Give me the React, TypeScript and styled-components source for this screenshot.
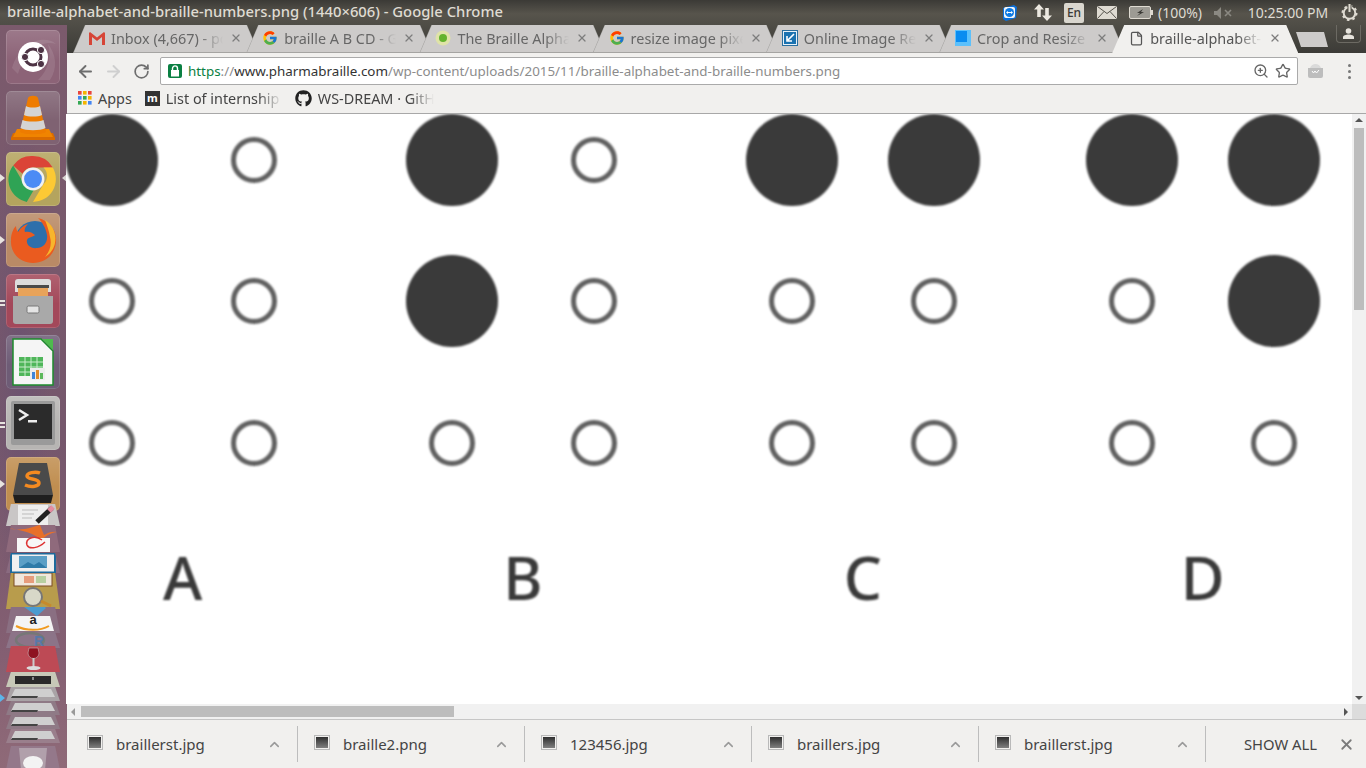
import React from 'react'
import styled, { createGlobalStyle } from 'styled-components'
import { ArrowLeft, ArrowRight, RotateCw, ZoomIn, Star, X, ChevronUp, File } from 'lucide-react'
import { FaGithub } from 'react-icons/fa'
import { FcGoogle } from 'react-icons/fc'

const UI_FONT = `'Noto Sans', 'Open Sans', sans-serif`

const Global = createGlobalStyle`
  html, body {
    margin: 0;
    width: 1366px;
    height: 768px;
    overflow: hidden;
    background: #3c3b37;
    font-family: ${UI_FONT};
  }
  * { box-sizing: border-box; }
`

const Screen = styled.div`
  width: 1366px;
  height: 768px;
  display: flex;
  flex-direction: column;
  overflow: hidden;
`

/* top panel */
const TopPanel = styled.div`
  height: 25px;
  flex: none;
  display: flex;
  align-items: center;
  padding-left: 7px;
  background: linear-gradient(#3b3a36, #57544c 55%, #4f4d46);
  color: #dfdbd2;
`

const WindowTitle = styled.div`
  flex: 1;
  font-size: 14.8px;
  font-weight: 500;
  line-height: 23px;
  padding-bottom: 2px;
  white-space: nowrap;
`

const Indicators = styled.div`
  display: flex;
  align-items: center;
  height: 25px;
  margin-right: 8px;
`

const Indicator = styled.div<{ $w: number; $mr?: number }>`
  width: ${(p) => p.$w}px;
  margin-right: ${(p) => p.$mr ?? 0}px;
  flex: none;
  display: flex;
  align-items: center;
  justify-content: center;
`

const LangBox = styled.div`
  width: 20px;
  height: 20px;
  border-radius: 2px;
  background: #d9d6ce;
  color: #3c3b37;
  font-size: 12px;
  font-weight: 500;
  display: flex;
  align-items: center;
  justify-content: center;
`

const PanelText = styled.span`
  font-size: 14px;
  white-space: nowrap;
  color: #dfdbd2;
`

/* launcher + browser */
const Desk = styled.div`
  flex: 1;
  display: flex;
  min-height: 0;
`

const Launcher = styled.div`
  width: 67px;
  flex: none;
  position: relative;
  overflow: hidden;
  padding: 5px 0 0 6px;
  background:
    radial-gradient(ellipse at 30% 45%, #6d5370 0, rgba(109, 83, 112, 0) 45%),
    linear-gradient(#7b5a6c, #75576c 55%, #845f72 85%, #8f6a78);
`

const Tile = styled.div<{ $bg: string }>`
  position: relative;
  width: 54px;
  height: 54px;
  margin-bottom: 7px;
  border-radius: 5px;
  background: linear-gradient(rgba(255, 255, 255, 0.14), rgba(255, 255, 255, 0) 55%), ${(p) => p.$bg};
  box-shadow: inset 0 0 0 1px rgba(255, 255, 255, 0.14);
  display: flex;
  align-items: center;
  justify-content: center;
`

const Pip = styled.div<{ $top: number; $right?: boolean; $color?: string }>`
  position: absolute;
  top: ${(p) => p.$top}px;
  ${(p) => (p.$right ? 'right: 0;' : 'left: 0;')}
  width: 0;
  height: 0;
  border-top: 4px solid transparent;
  border-bottom: 4px solid transparent;
  ${(p) =>
    p.$right
      ? `border-right: 5px solid ${p.$color ?? '#e8e4e0'};`
      : `border-left: 5px solid ${p.$color ?? '#e8e4e0'};`}
`

const DoublePip = styled.div<{ $top: number }>`
  position: absolute;
  left: 0;
  top: ${(p) => p.$top}px;
  width: 5px;
  height: 6px;
  border-top: 2px solid #e8e4e0;
  border-bottom: 2px solid #e8e4e0;
`

const FoldStack = styled.div`
  display: flex;
  flex-direction: column;
  margin-top: -14px;
  position: relative;
`

const Fold = styled.div<{ $h: number; $bg: string; $mt?: number }>`
  width: 54px;
  height: ${(p) => p.$h}px;
  margin-top: ${(p) => p.$mt ?? 0}px;
  background: ${(p) => p.$bg};
  clip-path: polygon(9% 0, 91% 0, 100% 100%, 0 100%);
  display: flex;
  align-items: center;
  justify-content: center;
  overflow: hidden;
`

/* browser */
const Browser = styled.div`
  flex: 1;
  min-width: 0;
  display: flex;
  flex-direction: column;
`

const TabStrip = styled.div`
  height: 28px;
  flex: none;
  position: relative;
  display: flex;
  padding-left: 6px;
  background: linear-gradient(#4f4d46, #3c3b37);
`

const Tab = styled.div<{ $active?: boolean }>`
  position: relative;
  z-index: ${(p) => (p.$active ? 2 : 1)};
  width: 186px;
  height: 28px;
  margin-right: -12.8px;
  flex: none;
  display: flex;
  align-items: center;
  padding: 0 12px 2px 16px;
  clip-path: polygon(0 100%, 12px 0, calc(100% - 12px) 0, 100% 100%);
  background: ${(p) => (p.$active ? '#f1f0ee' : '#a5a4a2')};

  &::before {
    content: '';
    position: absolute;
    inset: 0 1px ${(p) => (p.$active ? 0 : 1)}px 1px;
    clip-path: polygon(0 100%, 11.5px 0, calc(100% - 11.5px) 0, 100% 100%);
    background: ${(p) => (p.$active ? '#f1f0ee' : '#cdcbca')};
  }

  & > * {
    position: relative;
  }
`

const TabIcon = styled.div`
  width: 16px;
  height: 16px;
  flex: none;
  display: flex;
  align-items: center;
  justify-content: center;
  margin-right: 6px;
`

const Faded = styled.div<{ $w: number }>`
  width: ${(p) => p.$w}px;
  flex: none;
  white-space: nowrap;
  -webkit-mask-image: linear-gradient(to right, #000 calc(100% - 24px), transparent);
  mask-image: linear-gradient(to right, #000 calc(100% - 24px), transparent);
`

const TabTitle = styled(Faded)<{ $active?: boolean }>`
  font-size: 14.4px;
  color: ${(p) => (p.$active ? '#555' : '#666')};
`

const TabClose = styled.div`
  margin-left: 7px;
  display: flex;
  color: #7d7d7d;
`

const NewTab = styled.div`
  position: absolute;
  z-index: 3;
  left: 1229px;
  top: 7px;
  width: 32px;
  height: 15px;
  background: #cdcbca;
  clip-path: polygon(0 0, 28px 0, 100% 100%, 5px 100%);
`

const ProfileBtn = styled.div`
  position: absolute;
  right: 5px;
  top: 0;
  width: 25px;
  height: 18px;
  border: 1px solid #6c6a63;
  border-top: 0;
  border-radius: 0 0 4px 4px;
  display: flex;
  align-items: center;
  justify-content: center;
`

const Toolbar = styled.div`
  height: 32px;
  flex: none;
  display: flex;
  align-items: center;
  padding: 4px 0 0 4px;
  background: #f1f0ee;
`

const NavBtn = styled.div<{ $dim?: boolean }>`
  width: 28px;
  display: flex;
  justify-content: center;
  color: ${(p) => (p.$dim ? '#cfcfcf' : '#6e6e6e')};
`

const UrlBox = styled.div`
  width: 1138px;
  height: 28px;
  margin-left: 5px;
  flex: none;
  display: flex;
  align-items: center;
  padding: 0 3px 0 7px;
  background: #fff;
  border: 1px solid #aaa;
  border-radius: 2px;
`

const LockBadge = styled.div`
  width: 14px;
  height: 14px;
  border-radius: 2px;
  background: #0b8043;
  flex: none;
  margin-right: 6px;
  display: flex;
  align-items: center;
  justify-content: center;
`

const Url = styled.div`
  flex: 1;
  font-size: 13.4px;
  white-space: nowrap;
  color: #8c8c8c;
`

const UrlScheme = styled.span`
  color: #0b8043;
`

const UrlHost = styled.span`
  color: #333;
`

const UrlAction = styled.div`
  width: 22px;
  display: flex;
  justify-content: center;
  color: #666;
`

const ToolEnd = styled.div`
  flex: 1;
  display: flex;
  align-items: center;
  justify-content: space-between;
  padding: 0 15px 0 9px;
`

const MenuDots = styled.div`
  display: flex;
  flex-direction: column;
  gap: 3px;
`

const MenuDot = styled.i`
  width: 3px;
  height: 3px;
  border-radius: 50%;
  background: #777;
`

const Bookmarks = styled.div`
  height: 29px;
  flex: none;
  display: flex;
  align-items: center;
  padding: 0 0 2px 11px;
  background: #f1f0ee;
  border-bottom: 1px solid #a8a8a8;
`

const Bookmark = styled.div`
  display: flex;
  align-items: center;
  gap: 6px;
  margin-right: 13px;
  font-size: 14.4px;
  color: #444;
  white-space: nowrap;
`

const MBadge = styled.div`
  width: 15px;
  height: 15px;
  background: #333;
  color: #fff;
  font-size: 11px;
  font-weight: 700;
  line-height: 14px;
  text-align: center;
`

/* page */
const PageRow = styled.div`
  height: 590px;
  flex: none;
  display: flex;
`

const Canvas = styled.div`
  flex: 1;
  min-width: 0;
  overflow: hidden;
  background: #fff;
  display: flex;
  gap: 106.5px;
  margin-left: -1px;
  position: relative;
`

const Cell = styled.div`
  width: 233.5px;
  flex: none;
`

const DotGrid = styled.div`
  display: grid;
  grid-template-columns: 92px 92px;
  grid-auto-rows: 92px;
  column-gap: 49.5px;
  row-gap: 49.4px;
`

const Dot = styled.div<{ $on: boolean }>`
  align-self: center;
  justify-self: center;
  width: ${(p) => (p.$on ? 92 : 46)}px;
  height: ${(p) => (p.$on ? 92 : 46)}px;
  border-radius: 50%;
  background: ${(p) => (p.$on ? '#3a3a3a' : '#fff')};
  border: ${(p) => (p.$on ? 0 : 5)}px solid #606060;
  filter: blur(0.8px);
`

const Letter = styled.div`
  margin-top: 44px;
  text-align: center;
  font-family: 'Noto Sans', sans-serif;
  font-size: 60px;
  font-weight: 500;
  line-height: 88px;
  color: #3a3a3a;
  filter: blur(1px);
`

const VScroll = styled.div`
  width: 14px;
  flex: none;
  background: #f1f1f1;
  display: flex;
  flex-direction: column;
  align-items: center;
  padding-top: 4px;
`

const VThumb = styled.div`
  width: 10px;
  height: 182px;
  margin-top: 6px;
  background: #bdbdbd;
`

const VSpacer = styled.div`
  flex: 1;
`

const Arrow = styled.div<{ $dir: 'up' | 'down' | 'left' | 'right' }>`
  width: 0;
  height: 0;
  flex: none;
  ${(p) =>
    p.$dir === 'up'
      ? 'border-left:4px solid transparent;border-right:4px solid transparent;border-bottom:4px solid #555;'
      : p.$dir === 'down'
        ? 'border-left:4px solid transparent;border-right:4px solid transparent;border-top:4px solid #555;margin-bottom:4px;'
        : p.$dir === 'left'
          ? 'border-top:4px solid transparent;border-bottom:4px solid transparent;border-right:4px solid #999;'
          : 'border-top:4px solid transparent;border-bottom:4px solid transparent;border-left:4px solid #555;'}
`

const HScroll = styled.div`
  height: 15px;
  flex: none;
  display: flex;
  align-items: center;
  padding-left: 4px;
  background: #f1f1f1;
`

const HThumb = styled.div`
  width: 373px;
  height: 11px;
  margin-left: 6px;
  background: #bdbdbd;
`

const HCorner = styled.div`
  width: 14px;
  height: 15px;
  margin-left: 4px;
  flex: none;
  background: #dcdcdc;
`

const Shelf = styled.div`
  flex: 1;
  display: flex;
  align-items: center;
  padding-left: 4px;
  background: #f1f0ee;
  border-top: 1px solid #c6c6c6;
`

const ShelfItem = styled.div`
  width: 227px;
  height: 36px;
  flex: none;
  display: flex;
  align-items: center;
  padding: 0 15px 0 16px;
  border-right: 1px solid #bdbdbd;
  color: #444;
`

const FileThumb = styled.div`
  width: 16px;
  height: 15px;
  flex: none;
  margin: -4px 13px 0 0;
  border: 1px solid #b9b9b9;
  background: linear-gradient(#2e2e2e, #808080) content-box;
  padding: 1px;
`

const ShelfName = styled.div`
  flex: 1;
  font-size: 15px;
  white-space: nowrap;
`

const ShowAll = styled.div`
  margin-left: 38px;
  font-size: 14.8px;
  color: #444;
  white-space: nowrap;
`

const ShelfClose = styled.div`
  margin-left: 21px;
  display: flex;
  color: #7a7a7a;
`

/* drawings */
const GmailIcon = () => (
  <svg width="16" height="13" viewBox="0 0 16 13">
    <path d="M0 1v12h3V5l5 4 5-4v8h3V1l-1-1-7 5.5L1 0z" fill="#d64537" />
  </svg>
)

const BraillePageFav = () => (
  <svg width="16" height="16" viewBox="0 0 16 16">
    <circle cx="8" cy="8" r="7.5" fill="#dfe3a8" />
    <circle cx="8" cy="8" r="4" fill="#63b32d" />
  </svg>
)

const ResizeFav = () => (
  <svg width="16" height="16" viewBox="0 0 16 16">
    <rect x="0.5" y="0.5" width="15" height="15" fill="#e8f1f8" stroke="#2a6f9f" />
    <rect x="2" y="2" width="12" height="12" fill="#1a72b0" />
    <path d="M12 4 6 10M5 6v5h5" stroke="#fff" strokeWidth="1.6" fill="none" />
  </svg>
)

const CropFav = () => (
  <svg width="16" height="16" viewBox="0 0 16 16">
    <rect width="16" height="16" fill="#5cc0fb" />
    <rect x="1" y="1" width="11" height="11" fill="#0a8cf0" />
  </svg>
)

const TeamViewer = () => (
  <svg width="16" height="16" viewBox="0 0 16 16">
    <path d="M1 3l11-3 3 2-1 11-10 3-3-2z" fill="#0c6fd8" />
    <rect x="2" y="2" width="11" height="11" rx="2" fill="#f2f6fb" />
    <circle cx="7.5" cy="7.5" r="4.5" fill="#0e7be6" />
    <path d="M4 7.5l2-1.6v1h3v-1l2 1.6-2 1.6v-1H6v1z" fill="#fff" />
  </svg>
)

const NetArrows = () => (
  <svg width="18" height="17" viewBox="0 0 18 17">
    <path d="M5 0l5 5.5H6.800V13H3.200V5.500H0z" fill="#ece8e0" />
    <path d="M13 17l-5-5.500h3.200V4h3.600v7.500H18z" fill="#ece8e0" />
  </svg>
)

const Mail = () => (
  <svg width="20" height="13" viewBox="0 0 20 13">
    <rect width="20" height="13" rx="1" fill="#dfdbd2" />
    <path d="M0.5 0.5 10 7.5l9.500-7M0.500 12.500 7 5.500M19.500 12.500 13 5.500" stroke="#55524b" fill="none" />
  </svg>
)

const Battery = () => (
  <svg width="24" height="13" viewBox="0 0 24 13">
    <rect x="0.5" y="0.5" width="21" height="12" rx="1.5" fill="#9d9b94" stroke="#dfdbd2" />
    <rect x="22" y="4" width="2" height="5" fill="#dfdbd2" />
    <path d="M14 3 8 7h3l-3 3 7-4h-3z" fill="#3c3b37" />
  </svg>
)

const Mute = () => (
  <svg width="18" height="12" viewBox="0 0 18 12">
    <path d="M0 4h3l4-4v12L3 8H0z" fill="#8b8982" />
    <path d="M11 3l6 6M17 3l-6 6" stroke="#8b8982" strokeWidth="1.6" />
  </svg>
)

const Power = () => (
  <svg width="17" height="17" viewBox="0 0 17 17">
    <circle cx="8.5" cy="9" r="5.8" fill="none" stroke="#dfdbd2" strokeWidth="2" />
    <circle cx="8.5" cy="9" r="7" fill="none" stroke="#dfdbd2" strokeWidth="2" strokeDasharray="2.5 3" />
    <rect x="6.5" y="0" width="4" height="8" fill="#55524b" />
    <rect x="7.5" y="0" width="2" height="8" fill="#dfdbd2" />
  </svg>
)

const Person = () => (
  <svg width="13" height="11" viewBox="0 0 13 11">
    <circle cx="6.5" cy="3" r="2.8" fill="#e6e3dc" />
    <path d="M1 11V9c0-1.500 3-2.500 5.500-2.500S12 7.500 12 9v2z" fill="#e6e3dc" />
  </svg>
)

const Lock = () => (
  <svg width="10" height="12" viewBox="0 0 10 12">
    <path d="M2.500 5V3.400a2.500 2.500 0 0 1 5 0V5" fill="none" stroke="#fff" strokeWidth="1.400" />
    <rect x="1" y="5" width="8" height="6.500" fill="#fff" />
  </svg>
)

const Extension = () => (
  <svg width="17" height="14" viewBox="0 0 17 14">
    <path d="M1 4h15v8a2 2 0 0 1-2 2H3a2 2 0 0 1-2-2z" fill="#bdbdbd" />
    <path d="M3 4c1-2.500 3-4 5.500-4S13 1.500 14 4z" fill="#dadada" />
    <path d="M5 7l1.500 2L8 7l1.500 2L12 6" stroke="#fff" fill="none" />
  </svg>
)

const APPS_COLORS = ['#e8453c', '#f4b400', '#e8453c', '#4285f4', '#34a853', '#f4b400', '#34a853', '#f4b400', '#4285f4']

const AppsIcon = () => (
  <svg width="14" height="14" viewBox="0 0 14 14">
    {APPS_COLORS.map((c, i) => (
      <rect key={i} x={(i % 3) * 5} y={Math.floor(i / 3) * 5} width="3.600" height="3.600" fill={c} />
    ))}
  </svg>
)

const UbuntuMark = () => (
  <svg width="54" height="54" viewBox="0 0 54 54">
    <path d="M6 38C14 12 38 4 50 14 38 10 20 18 12 44z" fill="#fff" opacity="0.1" />
    <path d="M44 50c8-12 6-26-2-36 4 14 0 26-10 36z" fill="#fff" opacity="0.1" />
    <circle cx="27" cy="27" r="15" fill="#fff" />
    <circle cx="27" cy="27" r="8" fill="none" stroke="#4d3344" strokeWidth="3" />
    <circle cx="35" cy="20" r="3.600" fill="#4d3344" stroke="#fff" />
    <circle cx="35" cy="34" r="3.600" fill="#4d3344" stroke="#fff" />
    <circle cx="19" cy="27" r="3.600" fill="#4d3344" stroke="#fff" />
  </svg>
)

const Vlc = () => (
  <svg width="44" height="46" viewBox="0 0 44 46">
    <path d="M2 38h40l3 7H-1z" fill="#d96b00" />
    <path d="M6 34h32l4 8H2z" fill="#f08400" />
    <path d="M17 3c1-3 9-3 10 0l8 34c-3 3-23 3-26 0z" fill="#ee7c00" />
    <path d="M15 11c3 2 11 2 14 0l2 9c-4 2-14 2-18 0z" fill="#d4d4d4" />
    <path d="M11.500 25c5 2 16 2 21 0l2 8c-5 3-20 3-25 0z" fill="#d4d4d4" />
  </svg>
)

const Chrome = () => (
  <svg width="50" height="50" viewBox="0 0 48 48">
    <path d="M24 2a22 22 0 0 1 19 11H24a11 11 0 0 0-10 6L5 11A22 22 0 0 1 24 2z" fill="#db4437" />
    <path d="M5 11l10 17a10 10 0 0 0 10 6l-7 12A22 22 0 0 1 5 11z" fill="#2fa355" />
    <path d="M43 13a22 22 0 0 1-19 33l10-17a11 11 0 0 0 0-16z" fill="#fcc934" />
    <circle cx="24" cy="24" r="11" fill="#f1f1f1" />
    <circle cx="24" cy="24" r="8.600" fill="#4c8bf5" />
  </svg>
)

const Firefox = () => (
  <svg width="50" height="50" viewBox="0 0 50 50">
    <circle cx="27" cy="26" r="20" fill="#2d6fab" />
    <path d="M30 3c12 3 19 13 18 24-1 12-10 21-23 21S2 38 3 25c0-6 2-11 5-14 0 3 1 5 2 6 2-4 6-7 10-8-3 3-4 6-3 8 3-1 7 0 10 3-2 2-7 2-8 5-1 4 3 9 10 8 7 0 11-6 10-13-1-7-5-13-9-17z" fill="#ea5b1f" />
    <path d="M37 5c7 4 12 13 10 23-1 6-5 11-10 14 5-6 7-13 5-20-1-6-3-12-5-17z" fill="#f7b52c" />
  </svg>
)

const Files = () => (
  <svg width="42" height="46" viewBox="0 0 42 46">
    <path d="M3 4q0-3 3-3h30q3 0 3 3v10H3z" fill="#dcdcdc" />
    <rect x="5" y="7" width="32" height="3" fill="#4a4a4a" />
    <path d="M6 10h30v8H6z" fill="#e8a35a" />
    <path d="M1 18h40v25q0 3-3 3H4q-3 0-3-3z" fill="#a9a9a9" />
    <rect x="15" y="28" width="12" height="7" rx="1.500" fill="#e4e4e4" stroke="#777" />
  </svg>
)

const Calc = () => (
  <svg width="42" height="48" viewBox="0 0 42 48">
    <path d="M1 1h28l12 12v34H1z" fill="#f5f5f5" stroke="#1d8a2d" strokeWidth="1.500" />
    <path d="M30 1h11v11z" fill="#4dbb4d" />
    <rect x="7" y="19" width="24" height="19" fill="#4fb65a" />
    <path d="M7 24h24M7 29h24M7 34h24M13 19v19M19 19v19M25 19v19" stroke="#c9eccb" />
    <rect x="18" y="30" width="15" height="12" fill="#ececec" />
    <rect x="20" y="34" width="3" height="7" fill="#3f84d8" />
    <rect x="24" y="32" width="3" height="9" fill="#e08a2a" />
    <rect x="28" y="35" width="3" height="6" fill="#5cb85c" />
  </svg>
)

const Terminal = () => (
  <svg width="46" height="44" viewBox="0 0 46 44">
    <rect x="1" y="0" width="44" height="44" rx="2" fill="#9a9a9a" />
    <rect x="4" y="3" width="38" height="35" fill="#2b2b2b" />
    <path d="M9 9l8 5-8 5" fill="none" stroke="#eee" strokeWidth="2.500" />
    <rect x="18" y="19" width="9" height="2.500" fill="#eee" />
  </svg>
)

const Sublime = () => (
  <svg width="44" height="42" viewBox="0 0 44 42">
    <path d="M8 0h28l6 32H2z" fill="#4a4a4a" />
    <path d="M2 32h40l-2 8H4z" fill="#1f1f1f" />
    <path d="M29 10c-5-2-13 0-13 3 0 4 12 2 12 7 0 3-7 5-14 2" fill="none" stroke="#f48a20" strokeWidth="3.500" />
  </svg>
)

const PencilDoc = () => (
  <svg width="46" height="22" viewBox="0 0 46 22">
    <rect x="8" y="1" width="30" height="21" fill="#eee" />
    <path d="M12 6h16M12 10h12M12 14h10" stroke="#bbb" />
    <path d="M27 18 42 4" stroke="#222" strokeWidth="5" />
    <path d="M39 7 43 3" stroke="#e58ca0" strokeWidth="5" />
  </svg>
)

const Swoosh = () => (
  <svg width="54" height="28" viewBox="0 0 54 28">
    <path d="M2 3c14 4 24-1 32-3l4 10c4-3 10-4 13-3-8 1-12 5-16 8-5-4-8-8-33-12z" fill="#e8702a" />
    <rect x="11" y="13" width="33" height="15" fill="#f7f7f7" />
    <path d="M36 15c-8-6-17-1-15 5 2 5 12 3 18-3" fill="none" stroke="#d33" strokeWidth="1.500" />
  </svg>
)

const ImageDoc = () => (
  <svg width="46" height="20" viewBox="0 0 46 20">
    <rect x="1" y="0.500" width="44" height="19" fill="#f0f0f0" stroke="#1d6a9c" strokeWidth="2" />
    <rect x="9" y="3" width="28" height="12" fill="#5b9fc6" />
    <path d="M9 15l9-6 6 3 5-3 8 6z" fill="#2f7ba8" />
  </svg>
)

const Magnifier = () => (
  <svg width="54" height="36" viewBox="0 0 54 36">
    <rect x="8" y="0" width="38" height="13" fill="#f0e7dc" stroke="#7b4a22" />
    <rect x="18" y="3" width="10" height="7" fill="#e69c7c" />
    <rect x="30" y="3" width="10" height="7" fill="#b7cfa0" />
    <circle cx="27" cy="24" r="9" fill="#d8d8c8" stroke="#777" strokeWidth="2" />
    <path d="M35 28l10 5" stroke="#c68a2c" strokeWidth="3" />
  </svg>
)

const AmazonMark = () => (
  <svg width="54" height="26" viewBox="0 0 54 26">
    <path d="M18 0a14 9 0 0 1 22 1l-9 8z" fill="#4a9bd0" />
    <path d="M10 9h34l4 15H6z" fill="#f4f4f4" />
    <text x="27" y="17" textAnchor="middle" fontFamily="'Liberation Sans', sans-serif" fontWeight="700" fontSize="13" fill="#222">a</text>
    <path d="M10 19c10 5 24 5 33 0" stroke="#f09a1f" strokeWidth="2" fill="none" />
  </svg>
)

const RMark = () => (
  <svg width="54" height="16" viewBox="0 0 54 16">
    <ellipse cx="24" cy="8" rx="14" ry="7" fill="none" stroke="#777" strokeWidth="2.500" />
    <text x="33" y="14" textAnchor="middle" fontFamily="'Liberation Sans', sans-serif" fontWeight="700" fontSize="14" fill="#5878a8">R</text>
  </svg>
)

const Wine = () => (
  <svg width="54" height="26" viewBox="0 0 54 26">
    <path d="M23 2h9l1 5a5.500 5.500 0 0 1-11 0z" fill="#8e1220" stroke="#ccc" strokeWidth="0.500" />
    <path d="M27.500 12v9" stroke="#ccc" strokeWidth="2" />
    <ellipse cx="27.500" cy="22" rx="7" ry="2" fill="#ddd" />
  </svg>
)

const ScreenDrive = () => (
  <svg width="50" height="12" viewBox="0 0 50 12">
    <rect x="7" y="2" width="36" height="8" fill="#2a2a2a" />
    <path d="M25 3v3" stroke="#eee" />
  </svg>
)

const Drive = () => (
  <svg width="48" height="11" viewBox="0 0 48 11">
    <path d="M6 0h36l4 8H2z" fill="#cfcfcf" />
    <path d="M3 7h26l-1 2H2z" fill="#444" />
  </svg>
)

const Trash = () => (
  <svg width="34" height="24" viewBox="0 0 34 24">
    <path d="M3 2h28l-2 22H5z" fill="#dcdcdc" opacity="0.4" />
    <ellipse cx="17" cy="17" rx="10" ry="7" fill="#f3f3f3" />
  </svg>
)

const PAGE_DOTS: boolean[][] = [
  [true, false, false, false, false, false],
  [true, false, true, false, false, false],
  [true, true, false, false, false, false],
  [true, true, false, true, false, false],
]

const LETTERS = ['A', 'B', 'C', 'D']

type TabData = { title: string; icon: React.ReactNode; active?: boolean }

const TABS: TabData[] = [
  { title: 'Inbox (4,667) - po', icon: <GmailIcon /> },
  { title: 'braille A B CD - G', icon: <FcGoogle size={16} /> },
  { title: 'The Braille Alpha', icon: <BraillePageFav /> },
  { title: 'resize image pixe', icon: <FcGoogle size={16} /> },
  { title: 'Online Image Re', icon: <ResizeFav /> },
  { title: 'Crop and Resize', icon: <CropFav /> },
  { title: 'braille-alphabet-', icon: <File size={15} color="#555" />, active: true },
]

const DOWNLOADS = ['braillerst.jpg', 'braille2.png', '123456.jpg', 'braillers.jpg', 'braillerst.jpg']

const App = () => (
  <Screen>
    <Global />
    <TopPanel>
      <WindowTitle>braille-alphabet-and-braille-numbers.png (1440×606) - Google Chrome</WindowTitle>
      <Indicators>
        <Indicator $w={16} $mr={15}><TeamViewer /></Indicator>
        <Indicator $w={20} $mr={11}><NetArrows /></Indicator>
        <Indicator $w={20} $mr={13}><LangBox>En</LangBox></Indicator>
        <Indicator $w={20} $mr={12}><Mail /></Indicator>
        <Indicator $w={24} $mr={4}><Battery /></Indicator>
        <Indicator $w={46} $mr={11}><PanelText>(100%)</PanelText></Indicator>
        <Indicator $w={18} $mr={16}><Mute /></Indicator>
        <Indicator $w={80} $mr={13}><PanelText>10:25:00 PM</PanelText></Indicator>
        <Indicator $w={17}><Power /></Indicator>
      </Indicators>
    </TopPanel>
    <Desk>
      <Launcher>
        <Tile $bg="#8c6377"><UbuntuMark /></Tile>
        <Tile $bg="#7f6272"><Vlc /></Tile>
        <Tile $bg="#b4a45e"><Chrome /></Tile>
        <Pip $top={149} /><Pip $top={149} $right $color="#d9d5d2" />
        <Tile $bg="#b98a66"><Firefox /></Tile>
        <Pip $top={211} />
        <Tile $bg="#a3485a"><Files /></Tile>
        <DoublePip $top={275} />
        <Tile $bg="#6e5c76"><Calc /></Tile>
        <Tile $bg="#b7b5b3"><Terminal /></Tile>
        <DoublePip $top={397} />
        <Tile $bg="#c08e50"><Sublime /></Tile>
        <Pip $top={455} />
        <FoldStack>
          <Fold $h={22} $bg="#c9c6c6"><PencilDoc /></Fold>
          <Fold $h={27} $bg="#8f6a7c" $mt={-1}><Swoosh /></Fold>
          <Fold $h={20} $bg="#8a6b80" $mt={1}><ImageDoc /></Fold>
          <Fold $h={36} $bg="#b89c4c"><Magnifier /></Fold>
          <Fold $h={26} $bg="#8a6f82" $mt={-2}><AmazonMark /></Fold>
          <Fold $h={16} $bg="#8c7488" $mt={-1}><RMark /></Fold>
          <Fold $h={26} $bg="#bd4a55" $mt={-2}><Wine /></Fold>
          <Fold $h={15} $bg="#c7c9b8"><ScreenDrive /></Fold>
          <Fold $h={14} $bg="#a9a3a6"><Drive /></Fold>
          <Fold $h={14} $bg="#8f7a86"><Drive /></Fold>
          <Fold $h={14} $bg="#8f7a86"><Drive /></Fold>
          <Fold $h={14} $bg="#9a7f8c"><Drive /></Fold>
          <Fold $h={24} $bg="#94788a" $mt={3}><Trash /></Fold>
        </FoldStack>
        <Pip $top={669} $color="#5cb6ea" />
      </Launcher>
      <Browser>
        <TabStrip>
          {TABS.map((t) => (
            <Tab key={t.title} $active={t.active}>
              <TabIcon>{t.icon}</TabIcon>
              <TabTitle $w={112} $active={t.active}>{t.title}</TabTitle>
              <TabClose><X size={12} strokeWidth={2.5} /></TabClose>
            </Tab>
          ))}
          <NewTab />
          <ProfileBtn><Person /></ProfileBtn>
        </TabStrip>
        <Toolbar>
          <NavBtn><ArrowLeft size={19} strokeWidth={2.4} /></NavBtn>
          <NavBtn $dim><ArrowRight size={19} strokeWidth={2.4} /></NavBtn>
          <NavBtn><RotateCw size={17} strokeWidth={2.4} /></NavBtn>
          <UrlBox>
            <LockBadge><Lock /></LockBadge>
            <Url>
              <UrlScheme>https</UrlScheme>://<UrlHost>www.pharmabraille.com</UrlHost>/wp-content/uploads/2015/11/braille-alphabet-and-braille-numbers.png
            </Url>
            <UrlAction><ZoomIn size={16} /></UrlAction>
            <UrlAction><Star size={16} /></UrlAction>
          </UrlBox>
          <ToolEnd>
            <Extension />
            <MenuDots><MenuDot /><MenuDot /><MenuDot /></MenuDots>
          </ToolEnd>
        </Toolbar>
        <Bookmarks>
          <Bookmark><AppsIcon />Apps</Bookmark>
          <Bookmark><MBadge>m</MBadge><Faded $w={116}>List of internship</Faded></Bookmark>
          <Bookmark><FaGithub size={17} color="#222" /><Faded $w={116}>WS-DREAM · GitH</Faded></Bookmark>
        </Bookmarks>
        <PageRow>
          <Canvas>
            {LETTERS.map((l, i) => (
              <Cell key={l}>
                <DotGrid>
                  {PAGE_DOTS[i].map((on, j) => <Dot key={j} $on={on} />)}
                </DotGrid>
                <Letter>{l}</Letter>
              </Cell>
            ))}
          </Canvas>
          <VScroll>
            <Arrow $dir="up" />
            <VThumb />
            <VSpacer />
            <Arrow $dir="down" />
          </VScroll>
        </PageRow>
        <HScroll>
          <Arrow $dir="left" />
          <HThumb />
          <VSpacer />
          <Arrow $dir="right" />
          <HCorner />
        </HScroll>
        <Shelf>
          {DOWNLOADS.map((d, i) => (
            <ShelfItem key={i}>
              <FileThumb />
              <ShelfName>{d}</ShelfName>
              <ChevronUp size={15} color="#9a9a9a" strokeWidth={2.5} />
            </ShelfItem>
          ))}
          <ShowAll>SHOW ALL</ShowAll>
          <ShelfClose><X size={17} strokeWidth={2.5} /></ShelfClose>
        </Shelf>
      </Browser>
    </Desk>
  </Screen>
)

export default App
